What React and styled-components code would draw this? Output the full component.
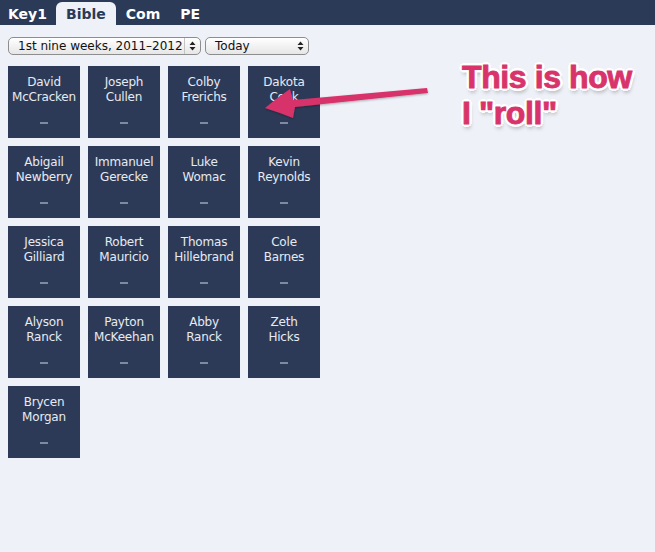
import React from 'react';
import styled, { createGlobalStyle } from 'styled-components';

const GlobalStyle = createGlobalStyle`
  html, body {
    margin: 0;
    padding: 0;
    background: #eef1f8;
    font-family: 'DejaVu Sans', 'Liberation Sans', sans-serif;
  }
`;

const Page = styled.div`
  position: relative;
  width: 655px;
  min-height: 552px;
  background: #eef1f8;
`;

const TabBar = styled.div`
  display: flex;
  align-items: flex-end;
  height: 25px;
  padding-left: 8px;
  background: #2b3a56;
`;

const Tab = styled.div`
  height: 23px;
  padding: 0 10px;
  display: flex;
  align-items: center;
  font-size: 14px;
  font-weight: bold;
  color: ${({ active }) => (active ? '#2b3a56' : '#ffffff')};
  background: ${({ active }) => (active ? '#eef1f8' : 'transparent')};
  border-radius: 6px 6px 0 0;

  &:first-child {
    padding: 0 9px 0 0;
  }
`;

const Filters = styled.div`
  display: flex;
  gap: 4px;
  padding: 12px 8px 0;
`;

const SelectBox = styled.div`
  width: ${({ w }) => w}px;
  height: 18px;
  box-sizing: border-box;
  border: 1px solid #8d8d8d;
  border-radius: 5px;
  background: linear-gradient(#ffffff, #e6e6e6);
  display: flex;
  align-items: center;
  font-size: 12px;
  color: #111;
`;

const SelectLabel = styled.span`
  flex: 1;
  padding-left: 9px;
  white-space: nowrap;
`;

const SelectArrows = styled.span`
  width: 15px;
  height: 100%;
  border-left: 1px solid ${({ divider }) => (divider ? '#c4c4c4' : 'transparent')};
  display: flex;
  align-items: center;
  justify-content: center;
`;

const Grid = styled.div`
  display: grid;
  grid-template-columns: repeat(4, 72px);
  gap: 8px;
  padding: 11px 8px 0;
`;

const Card = styled.div`
  height: 72px;
  background: #2d3a57;
  display: flex;
  flex-direction: column;
  align-items: center;
  padding-top: 9px;
  box-sizing: border-box;
`;

const Name = styled.div`
  font-size: 12px;
  line-height: 15px;
  color: #e6eaf2;
  text-align: center;
  letter-spacing: -0.2px;
`;

const Dash = styled.div`
  margin-top: auto;
  margin-bottom: 14px;
  width: 8px;
  height: 2px;
  background: #7f8aa2;
`;

const Note = styled.div`
  position: absolute;
  left: 462px;
  top: 59px;
  font-family: 'Liberation Sans', Arial, sans-serif;
  font-weight: bold;
  font-size: 32px;
  line-height: 36px;
  letter-spacing: -0.4px;
  color: #d8336a;
  -webkit-text-stroke: 0.9px #d8336a;
  text-shadow:
    3px 0 0 #fff, -3px 0 0 #fff, 0 3px 0 #fff, 0 -3px 0 #fff,
    2px 2px 0 #fff, -2px -2px 0 #fff, 2px -2px 0 #fff, -2px 2px 0 #fff,
    1px 4px 4px rgba(0, 0, 0, 0.35);
`;

const ArrowSvg = styled.svg`
  position: absolute;
  left: 258px;
  top: 82px;
`;

const students = [
  ['David', 'McCracken'],
  ['Joseph', 'Cullen'],
  ['Colby', 'Frerichs'],
  ['Dakota', 'Cook'],
  ['Abigail', 'Newberry'],
  ['Immanuel', 'Gerecke'],
  ['Luke', 'Womac'],
  ['Kevin', 'Reynolds'],
  ['Jessica', 'Gilliard'],
  ['Robert', 'Mauricio'],
  ['Thomas', 'Hillebrand'],
  ['Cole', 'Barnes'],
  ['Alyson', 'Ranck'],
  ['Payton', 'McKeehan'],
  ['Abby', 'Ranck'],
  ['Zeth', 'Hicks'],
  ['Brycen', 'Morgan'],
];

const Arrows = () => (
  <svg width="7" height="10" viewBox="0 0 7 10">
    <path d="M3.5 0.5 L6.5 4 L0.5 4 Z M3.5 9.5 L6.5 6 L0.5 6 Z" fill="#222" />
  </svg>
);

const App = () => (
  <Page>
    <GlobalStyle />
    <TabBar>
      <Tab>Key1</Tab>
      <Tab active>Bible</Tab>
      <Tab>Com</Tab>
      <Tab>PE</Tab>
    </TabBar>
    <Filters>
      <SelectBox w={193}>
        <SelectLabel>1st nine weeks, 2011–2012</SelectLabel>
        <SelectArrows divider><Arrows /></SelectArrows>
      </SelectBox>
      <SelectBox w={104}>
        <SelectLabel>Today</SelectLabel>
        <SelectArrows><Arrows /></SelectArrows>
      </SelectBox>
    </Filters>
    <Grid>
      {students.map(([first, last]) => (
        <Card key={first + last}>
          <Name>{first}</Name>
          <Name>{last}</Name>
          <Dash />
        </Card>
      ))}
    </Grid>
    <ArrowSvg width="177" height="42" viewBox="0 0 177 42">
      <defs>
        <filter id="sh" x="-10%" y="-30%" width="120%" height="160%">
          <feDropShadow dx="0" dy="1" stdDeviation="1" floodOpacity="0.3" />
        </filter>
      </defs>
      <path
        d="M7 26 Q20 15 32 7 L35 18 L169 6 L170 11 L37 25 L35 36 Q20 30 7 26 Z"
        fill="#d8336a"
        filter="url(#sh)"
      />
    </ArrowSvg>
    <Note>
      This is how
      <br />I "roll"
    </Note>
  </Page>
);

export default App;
